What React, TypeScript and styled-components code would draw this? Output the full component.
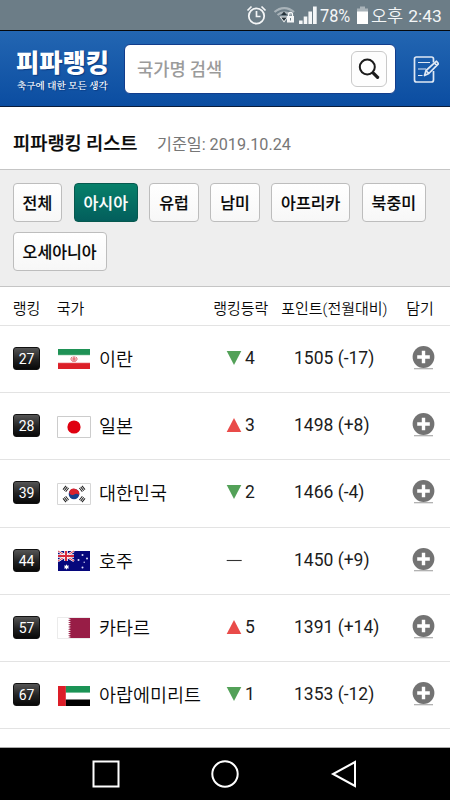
import React from "react";
import styled, { createGlobalStyle, css } from "styled-components";

const Global = createGlobalStyle`
  * { box-sizing: border-box; }
  html, body { margin: 0; padding: 0; background: #fff; }
  body {
    font-family: Roboto, "Noto Sans CJK KR", sans-serif;
    color: #080808;
    overflow: hidden;
  }
  button, input { font-family: inherit; margin: 0; }
`;

const Screen = styled.div`
  width: 450px;
  height: 800px;
  display: flex;
  flex-direction: column;
  overflow: hidden;
  background: #fff;
`;

const StatusBar = styled.div`
  flex: none;
  height: 31px;
  display: flex;
  align-items: center;
  justify-content: flex-end;
  padding-right: 9px;
  background: #6c7d87;
  border-bottom: 1px solid #05080c;
  color: #f4f6f7;
  font-size: 17.5px;
  line-height: 30px;
  white-space: nowrap;
`;

const StatusIcons = styled.svg`
  width: 74px;
  height: 30px;
  margin-right: 1px;
  margin-top: -1px;
`;

const Percent = styled.span`
  width: 34px;
  padding-top: 2px;
  transform: scaleX(0.93);
  transform-origin: left center;
`;

const Battery = styled.svg`
  width: 11px;
  height: 20px;
  margin: 0 3px 0 3px;
`;

const Clock = styled.span`
  width: 70px;
  padding-top: 2px;
  font-weight: 350;
  span { margin-left: 5px; font-weight: 400; font-size: 17.4px; }
`;

const AppHeader = styled.header`
  flex: none;
  height: 76px;
  display: flex;
  align-items: center;
  padding-left: 16px;
  background: linear-gradient(#2366b2, #0b4da1);
  border-bottom: 1px solid #0a1c3a;
`;

const Brand = styled.div`
  width: 108px;
  height: 50px;
  color: #fff;
  font-family: "Noto Sans CJK KR", sans-serif;
  white-space: nowrap;
`;

const BrandName = styled.div`
  font-size: 25.3px;
  font-weight: 900;
  line-height: 34px;
  height: 34px;
  text-shadow: 1px 1px 1px #0a3a80;
`;

const BrandLine = styled.div`
  padding-left: 1px;
  font-family: "Noto Serif CJK KR", "Noto Sans CJK KR", sans-serif;
  font-size: 9.6px;
  font-weight: 600;
  line-height: 15px;
  height: 15px;
  text-shadow: 1px 1px 1px #0a3a80;
`;

const SearchBox = styled.div`
  width: 272px;
  height: 50px;
  display: flex;
  align-items: center;
  padding: 0 8px 0 12px;
  border: 1px solid #123d8c;
  border-radius: 6px;
  background: #fff;
`;

const SearchInput = styled.input`
  flex: 1;
  min-width: 0;
  height: 40px;
  padding: 0 0 2px;
  border: 0;
  outline: 0;
  background: transparent;
  font-size: 17.7px;
  font-weight: 500;
  font-family: "Noto Sans CJK KR", sans-serif;
  &::placeholder { color: #9b9b9b; opacity: 1; }
`;

const SearchButton = styled.button`
  width: 36px;
  height: 36px;
  padding: 0;
  display: grid;
  place-items: center;
  border: 1px solid #c9c9c9;
  border-radius: 6px;
  background: #fdfdfd;
`;

const NoteButton = styled.button`
  width: 30px;
  height: 32px;
  margin-left: 13px;
  padding: 0;
  border: 0;
  background: none;
  svg { display: block; }
`;

const TitleBar = styled.div`
  flex: none;
  height: 62px;
  display: flex;
  align-items: center;
  padding: 8px 13px 0;
  white-space: nowrap;
`;

const Title = styled.h1`
  width: 144px;
  margin: 0;
  font-family: "Noto Sans CJK KR", sans-serif;
  font-size: 18.7px;
  font-weight: 500;
  -webkit-text-stroke: 0.25px #080808;
  line-height: 28px;
`;

const BaseDate = styled.span`
  padding-top: 5px;
  color: #777;
  font-size: 16.2px;
  font-weight: 400;
  line-height: 28px;
`;

const Filters = styled.nav`
  flex: none;
  height: 118.4px;
  display: flex;
  flex-wrap: wrap;
  align-content: flex-start;
  gap: 10px 11.3px;
  padding: 13px 12px 0 12.6px;
  background: #eee;
  border-top: 1px solid #c5c5c5;
  border-bottom: 1px solid #c5c5c5;
`;

const FilterButton = styled.button<{ $active?: boolean }>`
  height: 39px;
  padding: 0 9px;
  border: 1px solid #bdbdbd;
  border-radius: 4px;
  background: linear-gradient(#fff, #f7f7f7);
  color: #080808;
  font-family: "Noto Sans CJK KR", sans-serif;
  font-size: 16.1px;
  font-weight: 500;
  -webkit-text-stroke: 0.15px currentColor;
  line-height: 35px;
  white-space: nowrap;
  ${(p) =>
    p.$active &&
    css`
      border-color: #07594f;
      background: linear-gradient(#07806a, #035e5c);
      color: #fff;
    `}
`;

const ColumnHeads = styled.div`
  flex: none;
  height: 38.5px;
  display: grid;
  grid-template-columns: 44px 156.5px 68px 125px 1fr;
  align-items: center;
  padding: 3px 0 0 12.7px;
  border-bottom: 1px solid #e3e3e3;
  font-size: 15px;
  font-weight: 350;
  white-space: nowrap;
`;

const List = styled.div`
  flex: 1;
  min-height: 0;
  overflow: hidden;
  border-bottom: 1px solid #aaa;
`;

const Row = styled.div`
  height: 67.25px;
  display: grid;
  grid-template-columns: 44px 42px 127px 68px 118px 1fr;
  align-items: center;
  padding: 0 0 2.2px 13px;
  border-bottom: 1px solid #e3e3e3;
  white-space: nowrap;
`;

const Rank = styled.span`
  width: 27px;
  height: 23px;
  margin-top: 1px;
  border: 1px solid #111;
  border-radius: 3px;
  background: linear-gradient(#555, #222 55%, #080808);
  color: #fff;
  font-size: 14px;
  line-height: 23px;
  text-align: center;
`;

const FlagBox = styled.span`
  width: 34px;
  height: 22px;
  margin-top: 3px;
  svg { display: block; }
`;

const Country = styled.span`
  font-family: "Noto Sans CJK KR", sans-serif;
  font-size: 18.5px;
  font-weight: 350;
  line-height: 28px;
`;

const Change = styled.span`
  display: flex;
  align-items: center;
  gap: 3px;
  color: #1c1c1c;
  font-size: 17.5px;
  svg { display: block; }
`;

const Points = styled.span`
  color: #1c1c1c;
  font-size: 17.5px;
`;

const AddButton = styled.button`
  width: 23px;
  height: 24px;
  padding: 0;
  border: 0;
  background: none;
  svg { display: block; }
`;

const SystemNav = styled.div`
  flex: none;
  height: 52px;
  background: #000;
  display: flex;
  align-items: center;
  justify-content: center;
  gap: 91px;
`;

type Code = "ir" | "jp" | "kr" | "au" | "qa" | "ae";

const trigram = (x: number, y: number, turn: number) => (
  <g transform={`translate(${x} ${y}) rotate(${turn})`} stroke="#222" strokeWidth="1">
    <path d="M-2.4 -1.7H2.4M-2.4 0H2.4M-2.4 1.7H2.4" />
  </g>
);

const flags: Record<Code, React.ReactNode> = {
  ir: (
    <>
      <path fill="#fff" d="M1 1h32v20H1z" />
      <path fill="#1f9256" d="M1 1h32v6H1z" />
      <path fill="#dc2028" d="M1 15h32v6H1z" />
      <path stroke="#c8e6d2" strokeWidth=".8" d="M1 7.3h32" />
      <path stroke="#f2b8bb" strokeWidth=".8" d="M1 14.7h32" />
      <path fill="none" stroke="#d9404a" strokeWidth=".9" d="M17 8.2v5.600M15.200 8.800c-2.200 1.800-1 4.300 1.200 4.700M18.800 8.800c2.200 1.800 1 4.300-1.200 4.700M16 9.500v3M18 9.500v3" />
    </>
  ),
  jp: (
    <>
      <path fill="#fff" stroke="#ccc" d="M.5.5h33v21H.5z" />
      <circle cx="17" cy="11" r="6.600" fill="#df0010" />
    </>
  ),
  kr: (
    <>
      <path fill="#fff" stroke="#d6d6d6" d="M.5.5h33v21H.5z" />
      <circle cx="17" cy="11" r="5.300" fill="#17408c" />
      <path fill="#d9222d" d="M12.200 8.700a5.300 5.300 0 0 1 10 3.300c-1.700-1.700-3.400-1.700-5-.6-2 1.200-4.800.8-5-2.700z" />
      {trigram(8.8, 5.8, -52)}
      {trigram(25.2, 5.8, 52)}
      {trigram(8.8, 16.2, 52)}
      {trigram(25.2, 16.2, -52)}
    </>
  ),
  au: (
    <>
      <path fill="#06077c" d="M1 1h32v20H1z" />
      <path stroke="#fff" strokeWidth="2.400" d="M1 1l16 10M17 1L1 11" />
      <path stroke="#d8283c" strokeWidth=".9" d="M1 1l16 10M17 1L1 11" />
      <path stroke="#fff" strokeWidth="3.600" d="M9 1v10M1 6h16" />
      <path stroke="#d8283c" strokeWidth="2" d="M9 1v10M1 6h16" />
      <path fill="#fff" d="M9.500 14.300l.8 1.400 1.700-.3-.8 1.500.8 1.500-1.700-.2-.8 1.500-.8-1.500-1.700.2.800-1.500-.8-1.500 1.700.3z" />
      <g fill="#dfe0fa">
        <circle cx="25.500" cy="5" r="1" />
        <circle cx="21.500" cy="10" r="1" />
        <circle cx="30" cy="8.500" r="1" />
        <circle cx="27.200" cy="12.200" r=".7" />
        <circle cx="25.500" cy="17.500" r="1" />
      </g>
    </>
  ),
  qa: (
    <>
      <path fill="#fff" stroke="#e3e3e3" strokeWidth=".7" d="M.5.5h32v21H.5z" />
      <path fill="#981d46" d="M33 1v20H11l3-1.100-3-1.100 3-1.100-3-1.100 3-1.100-3-1.100 3-1.100-3-1.100 3-1.200-3-1.100 3-1.100-3-1.100 3-1.100-3-1.100 3-1.100-3-1.100 3-1.100L11 1z" />
    </>
  ),
  ae: (
    <>
      <path fill="#fff" d="M1 1h32v20H1z" />
      <path fill="#1b9355" d="M8.500 1H33v6.600H8.500z" />
      <path fill="#000" d="M8.500 14.500H33V21H8.500z" />
      <path fill="#dc1e28" d="M1 1h7.800v20H1z" />
    </>
  ),
};

const Flag = ({ code }: { code: Code }) => (
  <FlagBox>
    <svg width="34" height="22" viewBox="0 0 34 22">{flags[code]}</svg>
  </FlagBox>
);

const rows: { rank: number; code: Code; name: string; change: number; points: string }[] = [
  { rank: 27, code: "ir", name: "이란", change: -4, points: "1505 (-17)" },
  { rank: 28, code: "jp", name: "일본", change: 3, points: "1498 (+8)" },
  { rank: 39, code: "kr", name: "대한민국", change: -2, points: "1466 (-4)" },
  { rank: 44, code: "au", name: "호주", change: 0, points: "1450 (+9)" },
  { rank: 57, code: "qa", name: "카타르", change: 5, points: "1391 (+14)" },
  { rank: 67, code: "ae", name: "아랍에미리트", change: -1, points: "1353 (-12)" },
];

const regions = ["전체", "아시아", "유럽", "남미", "아프리카", "북중미", "오세아니아"];

const ChangeMark = ({ value }: { value: number }) => (
  <svg width="16" height="14" viewBox="0 0 16 14">
    {value > 0 && <path fill="#e94b49" d="M8 0l7.300 14H.7z" />}
    {value < 0 && <path fill="#53a158" d="M.7 0h14.600L8 14z" />}
    {value === 0 && <path stroke="#333" strokeWidth="1.100" d="M.7 7.500h15" />}
  </svg>
);

export default function App() {
  return (
    <Screen>
      <Global />
      <StatusBar>
        <StatusIcons viewBox="0 0 74 30" fill="none" stroke="#f4f6f7">
          <circle cx="11.500" cy="16" r="7.700" strokeWidth="1.800" />
          <path strokeWidth="1.700" d="M11.500 11v5.500h4M2.500 10.500l4-4M20.500 10.500l-4-4" />
          <g stroke="#a9b3b9" strokeWidth="2.200">
            <path d="M29.500 12c6-5.300 13.500-5.300 19.500 0M32.500 15c4-3.500 9.500-3.500 13.500 0" />
          </g>
          <path fill="#f4f6f7" stroke="none" d="M39 22.500l-4.500-6h9z" />
          <path fill="#26323a" stroke="none" d="M39 11.500l2.800 3.400h-5.600zM39 21l-2.800-3.600h5.600z" />
          <path fill="#f4f6f7" stroke="none" d="M42 16h7v6.500h-7z" />
          <path strokeWidth="1.300" d="M43.500 16v-1.500a2 2 0 0 1 4 0V16" />
          <path stroke="#6c7d87" strokeWidth="1" d="M45.500 18v2.500" />
          <path fill="#f4f6f7" stroke="none" d="M54 20.500h3.600V24H54zM58.700 16.500h3.600V24h-3.600zM63.400 11.500H67V24h-3.600zM68 6.500h3.700V24H68z" />
        </StatusIcons>
        <Percent>78%</Percent>
        <Battery viewBox="0 0 11 20">
          <path fill="#a9b3b9" d="M3 1.500h5v2h3v4H0v-4h3z" />
          <path fill="#fff" d="M0 6.500h11V19H0z" />
        </Battery>
        <Clock>오후<span>2:43</span></Clock>
      </StatusBar>

      <AppHeader>
        <Brand>
          <BrandName>피파랭킹</BrandName>
          <BrandLine>축구에 대한 모든 생각</BrandLine>
        </Brand>
        <SearchBox>
          <SearchInput placeholder="국가명 검색" />
          <SearchButton aria-label="검색">
            <svg width="24" height="24" viewBox="0 0 24 24" fill="none" stroke="#1b1b1b">
              <circle cx="10.300" cy="10" r="7.500" strokeWidth="2" />
              <path strokeWidth="3.200" strokeLinecap="round" d="M16.600 16.400l4 4" />
            </svg>
          </SearchButton>
        </SearchBox>
        <NoteButton aria-label="글쓰기">
          <svg width="30" height="32" viewBox="0 0 30 32" fill="none" stroke="#dfe8f4" strokeWidth="1.700">
            <path d="M24.500 9.500V6a2 2 0 0 0-2-2h-15a2 2 0 0 0-2 2v21a2 2 0 0 0 2 2h15a2 2 0 0 0 2-2v-9" />
            <path strokeWidth="1.200" d="M9 9.500h12M9 16h8M9 22.500h4.500" />
            <path strokeWidth="1.700" strokeLinejoin="round" d="M15.500 22.500l1.500-5L27.500 8.200l2 2.500-9.700 9.800zM17 17.500l2.800 3M25.500 10l2.400 2.600" />
          </svg>
        </NoteButton>
      </AppHeader>

      <TitleBar>
        <Title>피파랭킹 리스트</Title>
        <BaseDate>기준일: 2019.10.24</BaseDate>
      </TitleBar>

      <Filters>
        {regions.map((r) => (
          <FilterButton key={r} $active={r === "아시아"}>{r}</FilterButton>
        ))}
      </Filters>

      <ColumnHeads>
        <span>랭킹</span>
        <span>국가</span>
        <span>랭킹등락</span>
        <span>포인트(전월대비)</span>
        <span>담기</span>
      </ColumnHeads>

      <List>
        {rows.map((r) => (
          <Row key={r.rank}>
            <Rank>{r.rank}</Rank>
            <Flag code={r.code} />
            <Country>{r.name}</Country>
            <Change>
              <ChangeMark value={r.change} />
              {r.change !== 0 && <span>{Math.abs(r.change)}</span>}
            </Change>
            <Points>{r.points}</Points>
            <AddButton aria-label="담기">
              <svg width="23" height="24" viewBox="0 0 23 24">
                <path stroke="#aaa" strokeWidth="1.200" d="M2 22.700h19" />
                <circle cx="11.500" cy="11" r="10.900" fill="#737373" />
                <path stroke="#fff" strokeWidth="3.400" d="M11.500 4.700v12.600M5.200 11h12.600" />
              </svg>
            </AddButton>
          </Row>
        ))}
      </List>

      <SystemNav>
        <svg width="28" height="28" viewBox="0 0 28 28" fill="none" stroke="#fff" strokeWidth="2">
          <path d="M1.500 1.500h25v25h-25z" />
        </svg>
        <svg width="28" height="28" viewBox="0 0 28 28" fill="none" stroke="#fff" strokeWidth="2">
          <circle cx="14" cy="14" r="12.700" />
        </svg>
        <svg width="28" height="28" viewBox="0 0 28 28" fill="none" stroke="#fff" strokeWidth="2">
          <path d="M25 2v24L3 14z" />
        </svg>
      </SystemNav>
    </Screen>
  );
}
